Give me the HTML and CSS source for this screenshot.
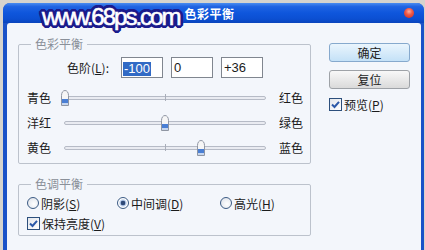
FILE: index.html
```html
<!DOCTYPE html>
<html>
<head>
<meta charset="utf-8">
<link rel="stylesheet" href="styles.css">
</head>
<body>
<div class="win">
  <div class="titlebar">
    <span class="mark">www.68ps.com</span>
    <span class="title">色彩平衡</span>
    <span class="close"></span>
  </div>
  <div class="content">
    <div class="main">
      <fieldset class="group g1">
        <legend>色彩平衡</legend>
        <div class="levels">
          <span class="lvl-label">色阶(<u>L</u>):</span>
          <div class="field"><span class="sel">-100</span></div>
          <div class="field">0</div>
          <div class="field">+36</div>
        </div>
        <div class="srow">
          <span class="sl">青色</span>
          <div class="slider">
            <div class="track"></div>
            <div class="tick"></div>
            <svg class="thumb" style="left:0px" viewBox="0 0 8 16" width="8" height="16"><path d="M0.5 15.5V5.5C0.5 2.5 2 0.5 4 0.5S7.5 2.5 7.5 5.5V15.5Z" fill="#f6f6f6" stroke="#8f96a3"/><rect x="1" y="9" width="6" height="4" fill="#4a7fd4"/><rect x="1" y="13" width="6" height="2" fill="#c6d6ee"/></svg>
          </div>
          <span class="sr">红色</span>
        </div>
        <div class="srow">
          <span class="sl">洋红</span>
          <div class="slider">
            <div class="track"></div>
            <div class="tick"></div>
            <svg class="thumb" style="left:100px" viewBox="0 0 8 16" width="8" height="16"><path d="M0.5 15.5V5.5C0.5 2.5 2 0.5 4 0.5S7.5 2.5 7.5 5.5V15.5Z" fill="#f6f6f6" stroke="#8f96a3"/><rect x="1" y="9" width="6" height="4" fill="#4a7fd4"/><rect x="1" y="13" width="6" height="2" fill="#c6d6ee"/></svg>
          </div>
          <span class="sr">绿色</span>
        </div>
        <div class="srow">
          <span class="sl">黄色</span>
          <div class="slider">
            <div class="track"></div>
            <div class="tick"></div>
            <svg class="thumb" style="left:136px" viewBox="0 0 8 16" width="8" height="16"><path d="M0.5 15.5V5.5C0.5 2.5 2 0.5 4 0.5S7.5 2.5 7.5 5.5V15.5Z" fill="#f6f6f6" stroke="#8f96a3"/><rect x="1" y="9" width="6" height="4" fill="#4a7fd4"/><rect x="1" y="13" width="6" height="2" fill="#c6d6ee"/></svg>
          </div>
          <span class="sr">蓝色</span>
        </div>
      </fieldset>
      <fieldset class="group g2">
        <legend>色调平衡</legend>
        <div class="radios">
          <div class="opt w90"><span class="radio"></span>阴影(<u>S</u>)</div>
          <div class="opt w103"><span class="radio on"></span>中间调(<u>D</u>)</div>
          <div class="opt"><span class="radio"></span>高光(<u>H</u>)</div>
        </div>
        <div class="opt crow"><span class="check"><svg viewBox="0 0 11 11" width="11" height="11"><path d="M2 5.5L4.5 8L9 2.8" fill="none" stroke="#2b58a8" stroke-width="2"/></svg></span>保持亮度(<u>V</u>)</div>
      </fieldset>
    </div>
    <div class="side">
      <div class="btn primary">确定</div>
      <div class="btn">复位</div>
      <div class="opt prev"><span class="check"><svg viewBox="0 0 11 11" width="11" height="11"><path d="M2 5.5L4.5 8L9 2.8" fill="none" stroke="#2b58a8" stroke-width="2"/></svg></span>预览(<u>P</u>)</div>
    </div>
  </div>
</div>
</body>
</html>
```

FILE: styles.css
```css
body {
  margin: 0;
  background: #d6d4ce;
  font-family: "Noto Sans CJK SC", sans-serif;
  font-size: 12px;
  color: #1b1b1b;
  overflow: hidden;
}

.win {
  margin: 3px 1px 0 3px;
  height: 247px;
  background: #1a52c8;
  border-radius: 7px 7px 0 0;
  display: flex;
  flex-direction: column;
}

.titlebar {
  height: 20px;
  flex: none;
  background: linear-gradient(#4a8cf0 0%, #2064e2 18%, #0e56dc 50%, #0b4fd2 80%, #0a44bc 100%);
  border-radius: 7px 7px 0 0;
  display: flex;
  align-items: center;
  padding: 0 10px 0 39px;
}

.mark {
  position: relative;
  z-index: 2;
  align-self: flex-start;
  margin-top: 4px;
  font-family: "Liberation Sans", sans-serif;
  font-size: 24px;
  letter-spacing: -2px;
  line-height: 20px;
  color: #fff;
  -webkit-text-stroke: 0.6px #fff;
  text-shadow:
    2px 0 0 #1b1b8c, -2px 0 0 #1b1b8c, 0 2px 0 #1b1b8c, 0 -2px 0 #1b1b8c,
    2px 2px 0 #1b1b8c, -2px -2px 0 #1b1b8c, 2px -2px 0 #1b1b8c, -2px 2px 0 #1b1b8c,
    3px 0 0 #1b1b8c, -3px 0 0 #1b1b8c, 0 3px 0 #1b1b8c, 0 -3px 0 #1b1b8c,
    3px 1px 0 #1b1b8c, -3px 1px 0 #1b1b8c, 1px 3px 0 #1b1b8c, 1px -3px 0 #1b1b8c,
    3px -1px 0 #1b1b8c, -3px -1px 0 #1b1b8c, -1px 3px 0 #1b1b8c, -1px -3px 0 #1b1b8c;
}

.title {
  margin-left: 5px;
  color: #fff;
  font-weight: 700;
  font-size: 12px;
  letter-spacing: 0.5px;
}

.close {
  margin-left: auto;
  width: 10px;
  height: 10px;
  border-radius: 50%;
  background: radial-gradient(circle at 50% 35%, #ffb0a0 0, #f05a48 40%, #c8281c 100%);
}

.content {
  flex: 1;
  background: #f3f6fb;
  margin: 0 3px 0 4px;
  border-radius: 3px 3px 0 0;
  display: flex;
  padding-left: 11px;
}

.main {
  width: 293px;
  padding-top: 14px;
}

.group {
  margin: 0;
  border: 1px solid #bcc2cc;
  border-radius: 2px;
  min-width: 0;
}

.group legend {
  margin-left: 4px;
  padding: 0 4px;
  line-height: 14px;
  color: #8a9099;
}

.g1 {
  padding: 6px 6px 3px 8px;
}

.g2 {
  margin-top: 13px;
  padding: 2px 6px 2px 8px;
}

.levels {
  display: flex;
  align-items: center;
  padding-left: 40px;
  margin-bottom: 7px;
}

.lvl-label {
  width: 54px;
}

.field {
  width: 42px;
  height: 21px;
  box-sizing: border-box;
  border: 1px solid #80868f;
  background: #fff;
  font-family: "Liberation Sans", sans-serif;
  font-size: 13px;
  line-height: 19px;
  padding-left: 2px;
  margin-right: 8px;
}

.field .sel {
  display: inline-block;
  margin-left: -1px;
  padding: 0 1px;
  line-height: 14px;
  vertical-align: middle;
  background: #316ac5;
  color: #fff;
}

.srow {
  display: flex;
  align-items: center;
  height: 25px;
}

.sl {
  width: 24px;
  margin-right: 10px;
}

.sr {
  margin-left: 10px;
}

.slider {
  position: relative;
  width: 208px;
  height: 16px;
}

.track {
  margin: 6px 3px 0;
  height: 4px;
  box-sizing: border-box;
  border: 1px solid #b6bbc6;
  background: #e9ebf1;
  border-radius: 2px;
}

.tick {
  position: absolute;
  left: 104px;
  top: 4px;
  width: 1px;
  height: 7px;
  background: #a9aeb9;
}

.thumb {
  position: absolute;
  top: 0;
  display: block;
}

.radios {
  display: flex;
  align-items: center;
  height: 20px;
}

.opt {
  display: flex;
  align-items: center;
}

.w90 { width: 90px; }
.w103 { width: 103px; }

.crow { height: 20px; }

.radio {
  width: 12px;
  height: 12px;
  box-sizing: border-box;
  border: 1px solid #3b5b84;
  border-radius: 50%;
  background: radial-gradient(circle at 60% 60%, #ffffff 0, #e9ecf1 60%, #d4d9e1 100%);
  margin-right: 2px;
}

.radio.on {
  background: radial-gradient(circle, #2f4a78 0, #2f4a78 2px, #a9c0e4 2.6px, #dbe6f5 3.6px, #ffffff 4.2px);
}

.check {
  width: 13px;
  height: 13px;
  box-sizing: border-box;
  border: 1px solid #2c4f7c;
  background: linear-gradient(135deg, #e2e6ec, #ffffff);
  margin-right: 2px;
  display: flex;
}

.check svg { display: block; }

.side {
  margin-left: 18px;
  width: 81px;
  padding-top: 20px;
}

.btn {
  height: 19px;
  box-sizing: border-box;
  border: 1px solid #9ea2a7;
  border-radius: 3px;
  background: linear-gradient(#f8f8f8, #dadada);
  display: flex;
  align-items: center;
  justify-content: center;
  margin-bottom: 8px;
  color: #222;
}

.btn.primary {
  border-color: #86a9cd;
  background: linear-gradient(#eaf5fd, #c4e1f7);
}

.prev {
  margin-top: 7px;
  height: 14px;
}

u {
  text-decoration: underline;
}
```
